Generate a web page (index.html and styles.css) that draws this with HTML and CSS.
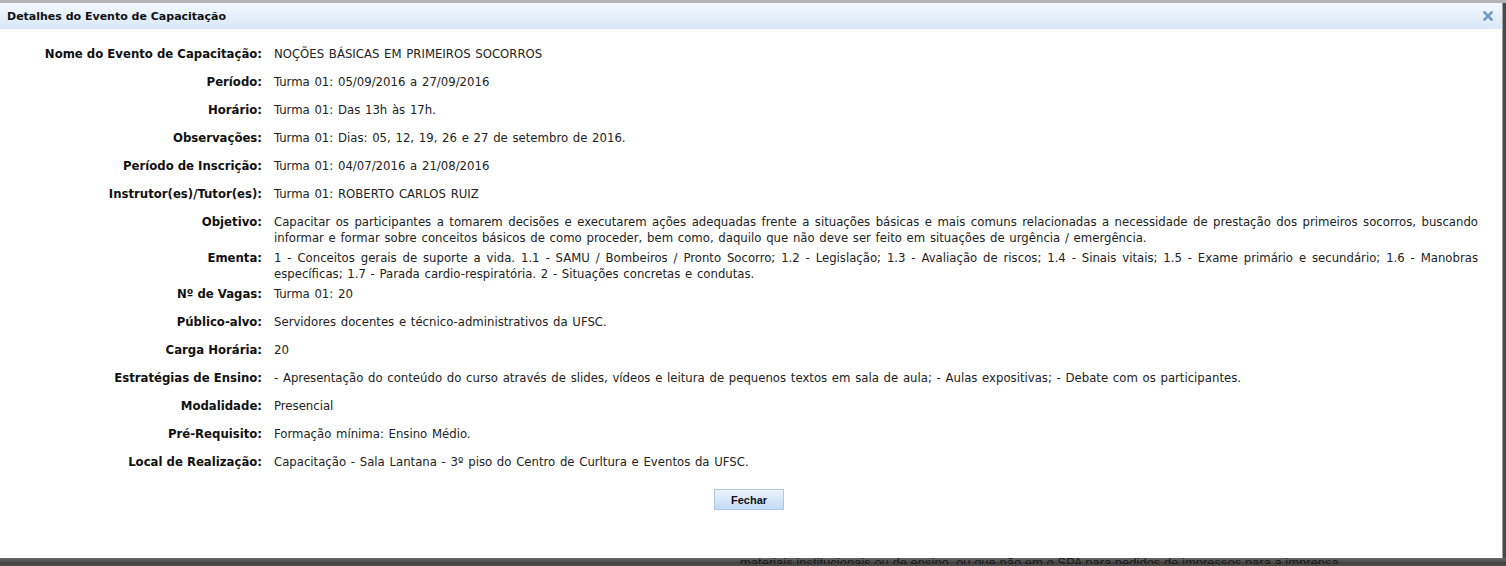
FILE: index.html
```html
<!DOCTYPE html>
<html>
<head>
    <title>Detalhes do Evento de Capacitação</title>
    <link rel="stylesheet" href="styles.css">
</head>
<body>
    <div class="dialog">
        <div class="dialog-title">
            <span>Detalhes do Evento de Capacitação</span>
            <svg class="close" width="10" height="10" viewBox="0 0 10 10"><path d="M1.5 1.5 L8.5 8.5 M8.5 1.5 L1.5 8.5" stroke="#6f98c2" stroke-width="2.6" stroke-linecap="square"/></svg>
        </div>
        <div class="dialog-body">
            <div class="row"><div class="label">Nome do Evento de Capacitação:</div><div class="value">NOÇÕES BÁSICAS EM PRIMEIROS SOCORROS</div></div>
            <div class="row"><div class="label">Período:</div><div class="value">Turma 01: 05/09/2016 a 27/09/2016</div></div>
            <div class="row"><div class="label">Horário:</div><div class="value">Turma 01: Das 13h às 17h.</div></div>
            <div class="row"><div class="label">Observações:</div><div class="value">Turma 01: Dias: 05, 12, 19, 26 e 27 de setembro de 2016.</div></div>
            <div class="row"><div class="label">Período de Inscrição:</div><div class="value">Turma 01: 04/07/2016 a 21/08/2016</div></div>
            <div class="row"><div class="label">Instrutor(es)/Tutor(es):</div><div class="value">Turma 01: ROBERTO CARLOS RUIZ</div></div>
            <div class="row"><div class="label">Objetivo:</div><div class="value">Capacitar os participantes a tomarem decisões e executarem ações adequadas frente a situações básicas e mais comuns relacionadas a necessidade de prestação dos primeiros socorros, buscando informar e formar sobre conceitos básicos de como proceder, bem como, daquilo que não deve ser feito em situações de urgência / emergência.</div></div>
            <div class="row"><div class="label">Ementa:</div><div class="value">1 - Conceitos gerais de suporte a vida. 1.1 - SAMU / Bombeiros / Pronto Socorro; 1.2 - Legislação; 1.3 - Avaliação de riscos; 1.4 - Sinais vitais; 1.5 - Exame primário e secundário; 1.6 - Manobras específicas; 1.7 - Parada cardio-respiratória. 2 - Situações concretas e condutas.</div></div>
            <div class="row"><div class="label">Nº de Vagas:</div><div class="value">Turma 01: 20</div></div>
            <div class="row"><div class="label">Público-alvo:</div><div class="value">Servidores docentes e técnico-administrativos da UFSC.</div></div>
            <div class="row"><div class="label">Carga Horária:</div><div class="value">20</div></div>
            <div class="row"><div class="label">Estratégias de Ensino:</div><div class="value">- Apresentação do conteúdo do curso através de slides, vídeos e leitura de pequenos textos em sala de aula; - Aulas expositivas; - Debate com os participantes.</div></div>
            <div class="row"><div class="label">Modalidade:</div><div class="value">Presencial</div></div>
            <div class="row"><div class="label">Pré-Requisito:</div><div class="value">Formação mínima: Ensino Médio.</div></div>
            <div class="row"><div class="label">Local de Realização:</div><div class="value">Capacitação - Sala Lantana - 3º piso do Centro de Curltura e Eventos da UFSC.</div></div>
            <div class="actions">
                <button class="button">Fechar</button>
            </div>
        </div>
    </div>
    <div class="backdrop-text">materiais institucionais ou de ensino, ou que não em o SPA para pedidos de impressos para a imprensa</div>
</body>
</html>
```

FILE: styles.css
```css
body {
    margin: 0;
    background: #4a4a4a;
    font-family: "DejaVu Sans Condensed", "DejaVu Sans", sans-serif;
    font-size: 13px;
    color: #222;
    overflow: hidden;
    height: 566px;
    border-top: 3px solid #b4b4b4;
    box-sizing: border-box;
}

.dialog {
    width: 1503px;
    height: 557px;
    background: #fff;
    border-right: 1px solid #a0a0a0;
    border-bottom: 1px solid #9a9a9a;
    box-sizing: border-box;
}

.dialog-title {
    height: 26px;
    background: linear-gradient(#f3f8fd, #d9e7f7);
    display: flex;
    align-items: center;
    justify-content: space-between;
    padding: 0 9px 0 7px;
    font-family: "DejaVu Sans", sans-serif;
    font-weight: bold;
    font-size: 11px;
    color: #111;
}

.dialog-body {
    padding: 15px 24px 0 0;
}

.row {
    display: flex;
    min-height: 28px;
    padding: 2px 0;
    box-sizing: border-box;
    line-height: 16px;
}

.label {
    width: 262px;
    flex: none;
    text-align: right;
    font-weight: bold;
    color: #111;
}

.value {
    flex: 1;
    padding-left: 12px;
    text-align: justify;
    word-spacing: 1px;
}

.actions {
    display: flex;
    justify-content: center;
    padding-top: 9px;
}

.button {
    width: 70px;
    height: 21px;
    margin-left: 20px;
    font-family: "Liberation Sans", Arial, sans-serif;
    font-size: 11px;
    font-weight: bold;
    color: #111;
    background: linear-gradient(#ebf3fc, #c4daf5);
    border: 1px solid #abc8ea;
    padding: 0;
}

.backdrop-text {
    height: 6px;
    overflow: hidden;
    line-height: 10px;
    margin-top: -2px;
    padding-left: 740px;
    font-family: "Liberation Sans", Arial, sans-serif;
    font-size: 13px;
    color: #1a1a1a;
    background: linear-gradient(#6a6a6a, #3a3a3a);
}
```
